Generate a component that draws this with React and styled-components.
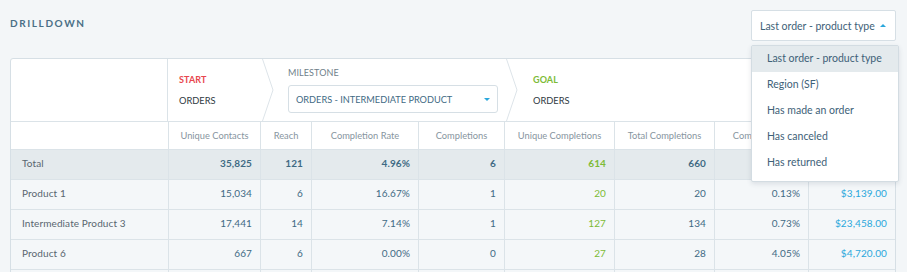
import React from "react";
import styled, { createGlobalStyle } from "styled-components";

const GlobalStyle = createGlobalStyle`
  html, body {
    margin: 0;
    padding: 0;
    background: #f3f6f8;
    overflow: hidden;
  }
  body {
    font-family: Lato, "Open Sans", sans-serif;
    -webkit-font-smoothing: antialiased;
  }
`;

const Page = styled.div`
  padding: 10px 11px 0 10px;
  height: 272px;
  box-sizing: border-box;
`;

const Header = styled.div`
  display: flex;
  justify-content: space-between;
  align-items: flex-start;
  height: 31px;
`;

const Title = styled.h1`
  margin: 7px 0 0;
  font-size: 10px;
  font-weight: 700;
  letter-spacing: 1.6px;
  color: #4a6f86;
`;

const DropdownWrap = styled.div`
  position: relative;
  z-index: 5;
`;

const DropdownButton = styled.div`
  width: 145px;
  height: 31px;
  box-sizing: border-box;
  border: 1px solid #d6dfe5;
  border-radius: 2px;
  background: #fff;
  display: flex;
  align-items: center;
  justify-content: space-between;
  padding: 0 9px 0 8px;
  font-size: 10.5px;
  color: #3e6178;
  white-space: nowrap;
`;

const Caret = styled.span`
  width: 0;
  height: 0;
  border-left: 3px solid transparent;
  border-right: 3px solid transparent;
  ${({ $up }) =>
    $up ? "border-bottom: 3px solid #2aa7dc;" : "border-top: 3px solid #2aa7dc;"}
`;

const Menu = styled.ul`
  position: absolute;
  top: 35px;
  left: 0;
  width: 148px;
  margin: 0;
  padding: 0 0 5px;
  list-style: none;
  background: #fff;
  border: 1px solid #d3dce2;
  border-radius: 2px;
  box-shadow: 0 2px 5px rgba(40, 60, 80, 0.12);
  box-sizing: border-box;
`;

const MenuItem = styled.li`
  height: 26px;
  line-height: 24px;
  padding-left: 15px;
  font-size: 10.5px;
  color: #3e6178;
  background: ${({ $active }) => ($active ? "#e4eaed" : "transparent")};
  white-space: nowrap;
`;

const Card = styled.div`
  margin-top: 17px;
  background: #fff;
  border: 1px solid #d6dfe5;
  border-radius: 3px;
  width: 886px;
  box-sizing: border-box;
`;

const StageRow = styled.div`
  display: grid;
  grid-template-columns: 157px 1fr;
  height: 63px;
  box-sizing: border-box;
  border-bottom: 1px solid #dbe3e8;
`;

const BlankCell = styled.div`
  border-right: 1px solid #dbe3e8;
`;

const Stages = styled.div`
  display: flex;
  align-items: stretch;
`;

const Stage = styled.div`
  width: ${({ $w }) => $w};
  flex: ${({ $w }) => ($w ? "none" : "1")};
  box-sizing: border-box;
  padding-left: ${({ $pad }) => $pad}px;
  display: flex;
  flex-direction: column;
  justify-content: center;
`;

const StageLabel = styled.div`
  font-size: 9px;
  font-weight: ${({ $color }) => ($color ? 700 : 400)};
  color: ${({ $color }) => $color || "#6f7f8a"};
  letter-spacing: 0.1px;
  margin-bottom: ${({ $gap }) => $gap}px;
`;

const StageValue = styled.div`
  font-size: 9.3px;
  color: #2f3a42;
`;

const Select = styled.div`
  width: 210px;
  height: 28px;
  box-sizing: border-box;
  border: 1px solid #d6dfe5;
  border-radius: 3px;
  display: flex;
  align-items: center;
  justify-content: space-between;
  padding: 0 7px 0 7px;
  font-size: 9.2px;
  color: #3f6a84;
  white-space: nowrap;
`;

const Chevron = () => (
  <svg width="12" height="62" viewBox="0 0 12 62" style={{ flex: "none" }}>
    <polyline points="0.5,0 11,31 0.5,62" fill="none" stroke="#dde4e9" strokeWidth="1" />
  </svg>
);

const Table = styled.div`
  display: grid;
  grid-template-columns: 157px 92px 51px 107px 86px 110px 100px 94px 87px;
`;

const HeadCell = styled.div`
  height: 28px;
  box-sizing: border-box;
  border-bottom: 1px solid #dbe3e8;
  border-left: ${({ $first }) => ($first ? "none" : "1px solid #dbe3e8")};
  display: flex;
  align-items: center;
  justify-content: center;
  padding-bottom: 1px;
  font-size: 9.3px;
  color: #8795a0;
  white-space: nowrap;
  overflow: hidden;
`;

const Cell = styled.div`
  height: 30px;
  box-sizing: border-box;
  border-bottom: 1px solid #dbe3e8;
  border-left: ${({ $first }) => ($first ? "none" : "1px solid #dbe3e8")};
  background: ${({ $total }) => ($total ? "#e4eaed" : "#f4f7f9")};
  display: flex;
  align-items: center;
  justify-content: ${({ $first }) => ($first ? "flex-start" : "flex-end")};
  padding: ${({ $first }) => ($first ? "0 0 3px 11px" : "0 8px 3px 0")};
  font-size: 10px;
  font-weight: ${({ $total, $first }) => ($total && !$first ? 700 : 400)};
  color: ${({ $tone, $first }) =>
    $first ? "#59666f" : $tone === "green" ? "#7dbb36" : $tone === "blue" ? "#2aa7dc" : "#3f6a84"};
  letter-spacing: 0.1px;
  white-space: nowrap;
`;

const columns = [
  "",
  "Unique Contacts",
  "Reach",
  "Completion Rate",
  "Completions",
  "Unique Completions",
  "Total Completions",
  "Completion %",
  "",
];

const rows = [
  { name: "Total", total: true, v: ["35,825", "121", "4.96%", "6", "614", "660", "", ""] },
  { name: "Product 1", v: ["15,034", "6", "16.67%", "1", "20", "20", "0.13%", "$3,139.00"] },
  { name: "Intermediate Product 3", v: ["17,441", "14", "7.14%", "1", "127", "134", "0.73%", "$23,458.00"] },
  { name: "Product 6", v: ["667", "6", "0.00%", "0", "27", "28", "4.05%", "$4,720.00"] },
  { name: "", v: ["", "", "", "", "", "", "", ""] },
];

const tones = [null, null, null, null, "green", null, null, "blue"];

const menuItems = [
  "Last order - product type",
  "Region (SF)",
  "Has made an order",
  "Has canceled",
  "Has returned",
];

export default function App() {
  return (
    <>
      <GlobalStyle />
      <Page>
        <Header>
          <Title>DRILLDOWN</Title>
          <DropdownWrap>
            <DropdownButton>
              <span>Last order - product type</span>
              <Caret $up />
            </DropdownButton>
            <Menu>
              {menuItems.map((m, i) => (
                <MenuItem key={m} $active={i === 0}>
                  {m}
                </MenuItem>
              ))}
            </Menu>
          </DropdownWrap>
        </Header>

        <Card>
          <StageRow>
            <BlankCell />
            <Stages>
              <Stage $w="94px" $pad={11}>
                <StageLabel $color="#e8474e" $gap={10}>START</StageLabel>
                <StageValue>ORDERS</StageValue>
              </Stage>
              <Chevron />
              <Stage $w="232px" $pad={14}>
                <StageLabel $gap={7}>MILESTONE</StageLabel>
                <Select>
                  <span>ORDERS - INTERMEDIATE PRODUCT</span>
                  <Caret />
                </Select>
              </Stage>
              <Chevron />
              <Stage $pad={15}>
                <StageLabel $color="#7dbb36" $gap={10}>GOAL</StageLabel>
                <StageValue>ORDERS</StageValue>
              </Stage>
            </Stages>
          </StageRow>

          <Table>
            {columns.map((c, i) => (
              <HeadCell key={i} $first={i === 0}>
                {c}
              </HeadCell>
            ))}
            {rows.map((r, ri) => (
              <React.Fragment key={ri}>
                <Cell $first $total={r.total}>
                  {r.name}
                </Cell>
                {r.v.map((val, i) => (
                  <Cell key={i} $total={r.total} $tone={tones[i]}>
                    {val}
                  </Cell>
                ))}
              </React.Fragment>
            ))}
          </Table>
        </Card>
      </Page>
    </>
  );
}
